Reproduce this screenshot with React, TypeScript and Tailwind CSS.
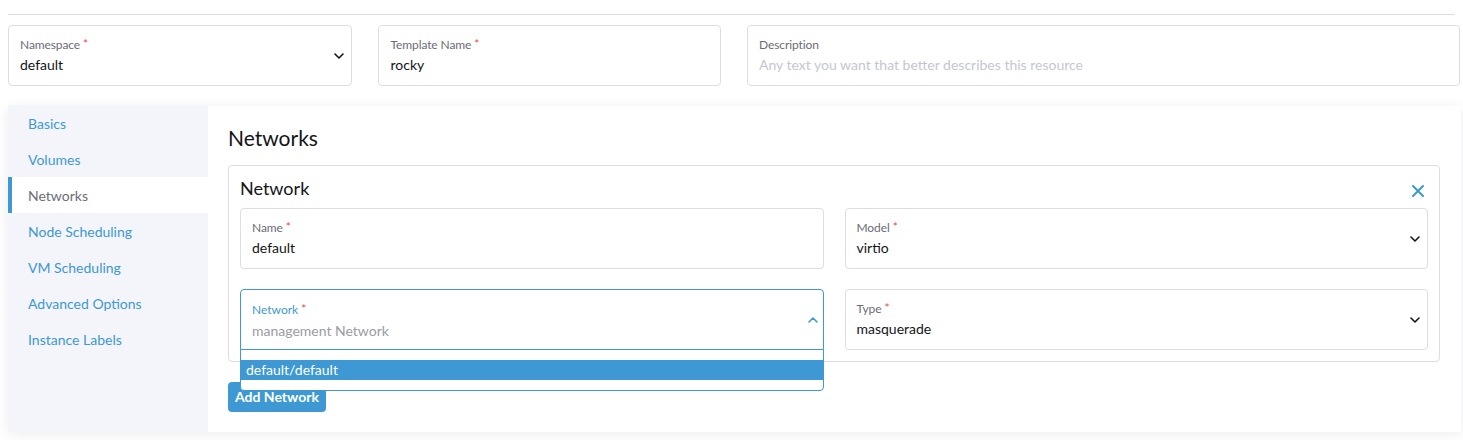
import React from "react";

const Chevron = ({ up = false, color = "#141419" }: { up?: boolean; color?: string }) => (
  <svg width="10" height="6" viewBox="0 0 10 6" fill="none" className="shrink-0">
    <path
      d={up ? "M1 5l4-4 4 4" : "M1 1l4 4 4-4"}
      stroke={color}
      strokeWidth="1.6"
      strokeLinecap="round"
      strokeLinejoin="round"
    />
  </svg>
);

const Star = () => <span className="text-[#f64747] text-[12px] align-top ml-[3px] leading-[14px]">*</span>;

function Field({
  label,
  value,
  placeholder,
  required = true,
  select = false,
  className = "",
}: {
  label: string;
  value?: string;
  placeholder?: string;
  required?: boolean;
  select?: boolean;
  className?: string;
}) {
  return (
    <div
      className={
        "h-[61px] border border-[#dcdee7] rounded-[4px] bg-white flex items-center pl-[11px] pr-[7px] " + className
      }
    >
      <div className="flex-1 min-w-0 pt-[1px]">
        <div className="text-[12px] leading-[16px] text-[#6c6c76] tracking-[-0.1px]">
          {label}
          {required && <Star />}
        </div>
        <div className={"text-[14px] leading-[20px] mt-[2px] " + (value ? "text-[#141419]" : "text-[#c6c6d3]")}>
          {value ?? placeholder}
        </div>
      </div>
      {select && <Chevron />}
    </div>
  );
}

export default function App() {
  const items = ["Basics", "Volumes", "Networks", "Node Scheduling", "VM Scheduling", "Advanced Options", "Instance Labels"];
  return (
    <div className="w-[1463px] h-[440px] bg-white overflow-hidden" style={{ fontFamily: "Lato, 'Open Sans', sans-serif" }}>
      <div className="pl-2 pr-[2px] pt-[14px]">
        <div className="h-px bg-[#dcdee7] mr-[6px]" />
        <div className="grid grid-cols-4 gap-x-[26px] mt-[10px] mr-[1px]">
          <Field label="Namespace" value="default" select className="pr-[6px]" />
          <Field label="Template Name" value="rocky" className="pl-[12px]" />
          <Field label="Description" placeholder="Any text you want that better describes this resource" required={false} className="col-span-2 pl-[11px]" />
        </div>
        <div className="mt-[20px] flex h-[326px] shadow-[0_2px_14px_rgba(20,20,60,0.08)] rounded-[2px]">
          <div className="w-[200px] bg-[#f4f5fa] flex flex-col -mt-[1px]">
            {items.map((it) => {
              const active = it === "Networks";
              return (
                <div
                  key={it}
                  className={
                    "h-[36px] flex items-center text-[14px] " +
                    (active
                      ? "bg-white text-[#6c6c76] border-l-[4px] border-[#3d98d3] pl-[16px]"
                      : "text-[#3d98d3] pl-[20px]")
                  }
                >
                  {it}
                </div>
              );
            })}
          </div>
          <div className="flex-1 bg-white pl-[20px] pr-[21px] pt-[19px]">
            <h2 className="text-[21px] leading-[26px] text-[#141419]">Networks</h2>
            <div className="mt-[14px] border border-[#dcdee7] rounded-[4px] px-[11px] pb-[11px] pt-[10px]">
              <div className="flex items-center justify-between h-[23px]">
                <div className="text-[18px] leading-[22px] text-[#141419]">Network</div>
                <svg width="12" height="12" viewBox="0 0 12 12" className="mr-[4px] mt-[6px]">
                  <path d="M1 1l10 10M11 1L1 11" stroke="#3d98d3" strokeWidth="2" strokeLinecap="round" />
                </svg>
              </div>
              <div className="grid grid-cols-2 gap-x-[21px] gap-y-[20px] mt-[9px]">
                <Field label="Name" value="default" />
                <Field label="Model" value="virtio" select />
                <div className="relative">
                  <div className="h-[61px] border border-[#3d98d3] rounded-t-[4px] bg-white flex items-center pl-[11px] pr-[5px]">
                    <div className="flex-1 pt-[3px]">
                      <div className="text-[12px] leading-[16px] text-[#3d98d3]">
                        Network
                        <Star />
                      </div>
                      <div className="text-[14px] leading-[20px] mt-[3px] text-[#9b9ba3]">management Network</div>
                    </div>
                    <Chevron up color="#3d98d3" />
                  </div>
                  <div className="absolute left-0 right-0 top-[60px] z-10 bg-white border border-[#3d98d3] rounded-b-[4px] pt-[10px] pb-[10px]">
                    <div className="h-[20px] bg-[#3d98d3] text-white text-[14px] leading-[20px] px-[5px]">default/default</div>
                  </div>
                </div>
                <Field label="Type" value="masquerade" select />
              </div>
            </div>
            <button className="mt-[20px] h-[30px] px-[7px] rounded-[4px] bg-[#3d98d3] text-white text-[14px] font-bold leading-[20px]">
              Add Network
            </button>
          </div>
        </div>
      </div>
    </div>
  );
}
